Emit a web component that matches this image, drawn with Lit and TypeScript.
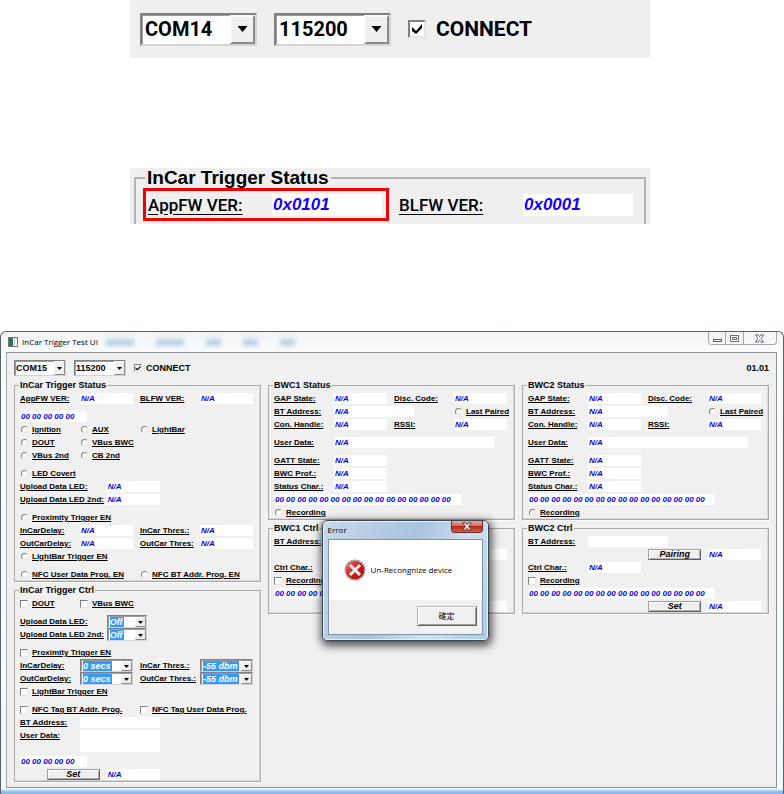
import { LitElement, html, css, svg, nothing } from "lit";
import { customElement } from "lit/decorators.js";

const BYTES_5 = "00 00 00 00 00";
const BYTES_16 = Array(16).fill("00").join(" ");

/* Etched group box with a bold caption set into its top line. */
@customElement("group-box")
export class GroupBox extends LitElement {
  static properties = { caption: { type: String } };
  declare caption: string;

  static styles = css`
    :host {
      display: block;
      min-width: 0;
    }
    fieldset {
      margin: 0;
      padding: 2px 0 0 5px;
      min-inline-size: 0;
      border: 1px solid #a9a9a9;
      box-shadow: inset -1px -1px 0 #d8d8d8, 1px 1px 0 #fcfcfc;
    }
    legend {
      margin-left: -1px;
      padding: 0 1px;
      font: bold 9px/10px "Liberation Sans", Arial, sans-serif;
      color: #000;
    }
  `;

  render() {
    return html`<fieldset>
      <legend>${this.caption}</legend>
      <slot></slot>
    </fieldset>`;
  }
}

@customElement("app-root")
export class AppRoot extends LitElement {
  static styles = css`
    :host {
      display: block;
      background: #fff;
      color: #000;
      font: bold 8px/13px "Liberation Sans", Arial, sans-serif;
    }
    * {
      box-sizing: border-box;
    }
    input,
    select,
    textarea,
    button {
      margin: 0;
      padding: 0;
      border: 0;
      border-radius: 0;
      appearance: none;
      outline: none;
      min-width: 0;
      color: inherit;
      font: inherit;
    }

    /* ---- enlarged strips ---- */
    .strip {
      max-width: 520px;
      margin-left: 130px;
      background: #efefef;
    }
    .connect-strip {
      display: flex;
      align-items: center;
      height: 58px;
      padding-left: 10px;
      gap: 17px;
      font: bold 20px/24px Roboto, "Liberation Sans", sans-serif;
    }
    .version-strip {
      margin-top: 110px;
      height: 56px;
      padding: 0 4px;
      overflow: hidden;
    }
    .version-box {
      margin: 0;
      padding: 1px 0 10px 7px;
      min-inline-size: 0;
      border: 2px solid #b4b4b4;
      border-bottom: 0;
    }
    .version-box legend {
      margin-left: 2px;
      padding: 0 2px;
      font: bold 19px/19px "Liberation Sans", Arial, sans-serif;
    }
    .version-row {
      display: grid;
      grid-template-columns: 246px 1fr;
      gap: 5px;
    }
    .version-cell {
      display: grid;
      grid-template-columns: 124px 110px;
      align-items: center;
      height: 33px;
      padding-left: 2px;
      border: 3px solid transparent;
    }
    .version-cell.marked {
      border-color: #f00000;
    }
    .version-cell label {
      font: 500 17px/20px Roboto, "Liberation Sans", sans-serif;
      text-decoration: underline;
      text-underline-offset: 3px;
    }
    .version-cell input {
      height: 22px;
      padding-left: 1px;
      background: #fff;
      color: #1400ff;
      font: italic bold 17px/22px "Liberation Sans", Arial, sans-serif;
    }

    /* ---- drop-downs ---- */
    .combo {
      display: flex;
      align-items: stretch;
      justify-content: space-between;
      background: #fff;
      border: 1px solid;
      border-color: #808080 #d4d4d4 #d4d4d4 #808080;
      box-shadow: inset 1px 1px 0 #9c9c9c;
    }
    .combo select {
      background: transparent;
    }
    .arrow {
      display: flex;
      align-items: center;
      justify-content: center;
      flex: none;
      width: 11px;
      background: #efefef;
      border: 1px solid;
      border-color: #f8f8f8 #8a8a8a #8a8a8a #f8f8f8;
    }
    .arrow svg {
      display: block;
      width: 5px;
      height: 3px;
    }
    .combo.large {
      width: 117px;
      height: 33px;
      border-width: 2px;
      padding-left: 3px;
    }
    .combo.large .arrow {
      width: 25px;
      border-width: 2px;
    }
    .combo.large .arrow svg {
      width: 11px;
      height: 6px;
    }
    .combo.bar {
      width: 52px;
      height: 16px;
      padding-left: 1px;
      font-size: 9px;
    }
    .combo.marked {
      height: 13px;
      padding: 1px 0 0 2px;
      font-style: italic;
      font-size: 9px;
      line-height: 11px;
    }
    .combo.marked select {
      background: #3399ff;
      color: #fff;
      padding-right: 1px;
    }

    /* ---- tick boxes and radios ---- */
    .tick {
      display: flex;
      align-items: center;
      gap: 4px;
      white-space: nowrap;
    }
    .tick input {
      flex: none;
      width: 8px;
      height: 8px;
      background: #fff;
      border: 1px solid;
      border-color: #808080 #e6e6e6 #e6e6e6 #808080;
    }
    .tick input[type="radio"] {
      border-radius: 50%;
      margin-left: 1px;
      width: 7px;
      height: 7px;
    }
    .tick .mark {
      display: grid;
    }
    .tick .mark > * {
      grid-area: 1 / 1;
    }
    .tick .mark svg {
      place-self: center;
      width: 6px;
      height: 6px;
      pointer-events: none;
    }
    .tick.large {
      gap: 10px;
      font-size: 21px;
    }
    .tick.large input {
      width: 18px;
      height: 18px;
      border-width: 2px;
    }
    .tick.large .mark svg {
      width: 12px;
      height: 12px;
    }
    .caption {
      text-decoration: underline;
      text-underline-offset: 1px;
      white-space: nowrap;
    }

    /* ---- application window ---- */
    .window {
      position: relative;
      margin-top: 107px;
      padding: 0 6px 6px 5px;
      border: 1px solid #5a6066;
      border-bottom-color: #7d9cc4;
      border-radius: 6px 6px 0 0;
      background:
        linear-gradient(#e4f8ff, #8fb6e8 60%) bottom / 100% 5px no-repeat,
        linear-gradient(#f1f4f6, #fbfcfd 5%, #f8fafb 60%, #f2fbfb);
    }
    .titlebar {
      display: flex;
      align-items: flex-start;
      height: 20px;
    }
    .app-icon {
      flex: none;
      width: 10px;
      height: 10px;
      margin: 5px 4px 0 2px;
    }
    .title {
      margin: 0;
      padding-top: 4px;
      font: 8px/12px "Open Sans", "Noto Sans", sans-serif;
      white-space: nowrap;
    }
    .reflections {
      display: flex;
      flex: 1;
      gap: 22px;
      padding: 7px 0 0 8px;
    }
    .reflections i {
      width: 15px;
      height: 7px;
      background: #9fc3e0;
      filter: blur(2px);
      opacity: 0.7;
    }
    .reflections i.wide {
      width: 28px;
    }
    .window-buttons {
      display: flex;
      width: 69px;
      height: 13px;
      border: 1px solid #a3a8ad;
      border-top: 0;
      border-radius: 0 0 4px 4px;
    }
    .window-buttons button {
      display: grid;
      place-items: center;
      flex: 1;
      background: transparent;
      border-right: 1px solid #a3a8ad;
    }
    .window-buttons button:last-child {
      flex: 2;
      border-right: 0;
    }
    .window-buttons svg {
      display: block;
      width: 11px;
      height: 9px;
    }
    .client {
      padding: 7px 7px 5px;
      background: #f0f0f0;
      border: 1px solid #8c9196;
      border-left-color: #a5a9ad;
    }
    .bar-row {
      display: flex;
      align-items: center;
      gap: 8px;
      height: 16px;
      margin-bottom: 4px;
      font-size: 9px;
    }
    .version {
      margin-left: auto;
    }
    .columns {
      display: grid;
      grid-template-columns: repeat(3, minmax(0, 1fr));
      gap: 7px;
      align-items: start;
    }
    .column {
      display: grid;
      gap: 3px;
      min-width: 0;
    }

    /* ---- rows on a 36-unit character grid ---- */
    .row {
      display: grid;
      grid-template-columns: repeat(36, minmax(0, 1fr));
      align-items: center;
      height: 13px;
    }
    .row.spaced {
      margin-top: 5px;
    }
    .row.tall {
      height: 26px;
      align-items: start;
    }
    .u0 { grid-column-start: 1; }
    .u4 { grid-column-start: 5; }
    .u9 { grid-column-start: 10; }
    .u13 { grid-column-start: 14; }
    .u18 { grid-column-start: 19; }
    .u27 { grid-column-start: 28; }
    .s6 { grid-column-end: span 6; }
    .s8 { grid-column-end: span 8; }
    .s9 { grid-column-end: span 9; }
    .s10 { grid-column-end: span 10; }
    .s12 { grid-column-end: span 12; }
    .s13 { grid-column-end: span 13; }
    .s18 { grid-column-end: span 18; }
    .s24 { grid-column-end: span 24; }
    .s28 { grid-column-end: span 28; }
    .row input.value,
    .row textarea {
      width: 100%;
      height: 11px;
      padding-left: 1px;
      background: #fff;
      color: #0000f0;
      font-style: italic;
      line-height: 11px;
    }
    .row textarea {
      height: 22px;
      margin-top: 1px;
      resize: none;
      display: block;
    }
    .push {
      height: 11px;
      background: #efefef;
      border: 1px solid;
      border-color: #a0a0a0 #606060 #606060 #a0a0a0;
      box-shadow: inset 1px 1px 0 #fff, inset -1px -1px 0 #b0b0b0;
      font-style: italic;
      font-size: 9px;
      line-height: 9px;
    }

    /* ---- error dialog ---- */
    .dialog {
      position: absolute;
      top: 188px;
      left: 41%;
      width: 167px;
      padding: 0 5px 5px;
      border: 1px solid #3c4650;
      border-radius: 5px;
      background: linear-gradient(115deg, #c9d9ea, #a9c3de 45%, #cfe0f0 70%, #a7cdec);
      box-shadow: inset 0 0 0 1px #e8f2fb, 1px 3px 8px 2px rgba(0, 0, 0, 0.65);
      font: 8px/12px "Open Sans", "Noto Sans", "Noto Sans CJK TC", sans-serif;
    }
    .dialog-title {
      display: flex;
      justify-content: space-between;
      height: 18px;
    }
    .dialog-title h2 {
      margin: 0;
      padding-top: 3px;
      font: inherit;
    }
    .dialog-close {
      display: grid;
      place-items: center;
      width: 32px;
      height: 12px;
      border: 1px solid #6b2a26;
      border-top: 0;
      border-radius: 0 0 4px 4px;
      background: linear-gradient(#e3a79d, #cf6a5a 45%, #b42a18 50%, #cf6248);
    }
    .dialog-close svg {
      display: block;
      width: 10px;
      height: 9px;
    }
    .dialog-body {
      border: 1px solid #7f93a8;
      background: #fff;
    }
    .message {
      display: flex;
      align-items: center;
      gap: 5px;
      height: 60px;
      padding-left: 15px;
    }
    .message svg {
      flex: none;
      width: 22px;
      height: 22px;
    }
    .message p {
      margin: 0;
      white-space: nowrap;
    }
    .actions {
      display: flex;
      justify-content: flex-end;
      padding: 6px 5px 8px;
      background: #f0f0f0;
    }
    .actions button {
      width: 60px;
      height: 20px;
      border: 1px solid;
      border-color: #b8b8b8 #606060 #606060 #b8b8b8;
      box-shadow: inset 1px 1px 0 #fff, inset -1px -1px 0 #a0a0a0;
      background: #f0f0f0;
    }
  `;

  private arrow() {
    return html`<span class="arrow" aria-hidden="true">
      <svg viewBox="0 0 10 6"><path d="M0 0h10L5 6z" fill="#000" /></svg>
    </span>`;
  }

  private combo(classes: string, name: string, value: string, id?: string) {
    return html`<span class="combo ${classes}">
      <select id=${id ?? nothing} aria-label=${name}>
        <option>${value}</option>
      </select>
      ${this.arrow()}
    </span>`;
  }

  private connect(size = "") {
    return html`<label class="tick ${size}">
      <span class="mark">
        <input type="checkbox" checked />
        <svg viewBox="0 0 12 12">
          <path d="M1 4l4 4 6-7v4L5 11 1 8z" fill="#000" />
        </svg>
      </span>
      CONNECT
    </label>`;
  }

  private tick(type: "radio" | "checkbox", text: string, place: string) {
    return html`<label class="tick ${place}">
      <input type=${type} /><span class="caption">${text}</span>
    </label>`;
  }

  private caption(text: string, id: string, place = "u0 s9") {
    return html`<label class="caption ${place}" for=${id}>${text}</label>`;
  }

  private value(id: string, place: string, value = "N/A") {
    return html`<input class="value ${place}" id=${id} aria-label=${id} readonly .value=${value} />`;
  }

  private triggerStatus() {
    const radio = (t: string, p: string) => this.tick("radio", t, p);
    return html`<group-box caption="InCar Trigger Status">
      <div class="row">
        ${this.caption("AppFW VER:", "app-fw")} ${this.value("app-fw", "u9 s8")}
        ${this.caption("BLFW VER:", "bl-fw", "u18 s9")} ${this.value("bl-fw", "u27 s8")}
      </div>
      <div class="row spaced">${this.value("status-bytes", "u0 s10", BYTES_5)}</div>
      <div class="row">
        ${radio("Ignition", "u0 s9")} ${radio("AUX", "u9 s9")} ${radio("LightBar", "u18 s9")}
      </div>
      <div class="row">${radio("DOUT", "u0 s9")} ${radio("VBus BWC", "u9 s9")}</div>
      <div class="row">${radio("VBus 2nd", "u0 s9")} ${radio("CB 2nd", "u9 s9")}</div>
      <div class="row spaced">${radio("LED Covert", "u0 s18")}</div>
      <div class="row">
        ${this.caption("Upload Data LED:", "led", "u0 s13")} ${this.value("led", "u13 s8")}
      </div>
      <div class="row">
        ${this.caption("Upload Data LED 2nd:", "led2", "u0 s13")} ${this.value("led2", "u13 s8")}
      </div>
      <div class="row spaced">${radio("Proximity Trigger EN", "u0 s18")}</div>
      <div class="row">
        ${this.caption("InCarDelay:", "in-delay")} ${this.value("in-delay", "u9 s8")}
        ${this.caption("InCar Thres.:", "in-thres", "u18 s9")} ${this.value("in-thres", "u27 s8")}
      </div>
      <div class="row">
        ${this.caption("OutCarDelay:", "out-delay")} ${this.value("out-delay", "u9 s8")}
        ${this.caption("OutCar Thres:", "out-thres", "u18 s9")} ${this.value("out-thres", "u27 s8")}
      </div>
      <div class="row">${radio("LightBar Trigger EN", "u0 s18")}</div>
      <div class="row spaced">
        ${radio("NFC User Data Prog. EN", "u0 s18")} ${radio("NFC BT Addr. Prog. EN", "u18 s18")}
      </div>
    </group-box>`;
  }

  private triggerCtrl() {
    const box = (t: string, p: string) => this.tick("checkbox", t, p);
    return html`<group-box caption="InCar Trigger Ctrl">
      <div class="row">${box("DOUT", "u0 s9")} ${box("VBus BWC", "u9 s9")}</div>
      <div class="row spaced">
        ${this.caption("Upload Data LED:", "set-led", "u0 s13")}
        ${this.combo("marked u13 s6", "Upload Data LED", "Off", "set-led")}
      </div>
      <div class="row">
        ${this.caption("Upload Data LED 2nd:", "set-led2", "u0 s13")}
        ${this.combo("marked u13 s6", "Upload Data LED 2nd", "Off", "set-led2")}
      </div>
      <div class="row spaced">${box("Proximity Trigger EN", "u0 s18")}</div>
      <div class="row">
        ${this.caption("InCarDelay:", "set-in-delay")}
        ${this.combo("marked u9 s8", "InCarDelay", "0 secs", "set-in-delay")}
        ${this.caption("InCar Thres.:", "set-in-thres", "u18 s9")}
        ${this.combo("marked u27 s8", "InCar Thres.", "-55 dbm", "set-in-thres")}
      </div>
      <div class="row">
        ${this.caption("OutCarDelay:", "set-out-delay")}
        ${this.combo("marked u9 s8", "OutCarDelay", "0 secs", "set-out-delay")}
        ${this.caption("OutCar Thres.:", "set-out-thres", "u18 s9")}
        ${this.combo("marked u27 s8", "OutCar Thres.", "-55 dbm", "set-out-thres")}
      </div>
      <div class="row">${box("LightBar Trigger EN", "u0 s18")}</div>
      <div class="row spaced">
        ${box("NFC Tag BT Addr. Prog.", "u0 s18")} ${box("NFC Tag User Data Prog.", "u18 s18")}
      </div>
      <div class="row">
        ${this.caption("BT Address:", "tag-address")} ${this.value("tag-address", "u9 s12", "")}
      </div>
      <div class="row tall">
        ${this.caption("User Data:", "tag-data")}
        <textarea class="u9 s12" id="tag-data"></textarea>
      </div>
      <div class="row">${this.value("ctrl-bytes", "u0 s10", BYTES_5)}</div>
      <div class="row">
        <button class="push u4 s8">Set</button>
        ${this.value("set-result", "u13 s8")}
      </div>
    </group-box>`;
  }

  private bwc(n: number) {
    const id = (s: string) => `bwc${n}-${s}`;
    return html`<div class="column">
      <group-box caption="BWC${n} Status">
        <div class="row">
          ${this.caption("GAP State:", id("gap"))} ${this.value(id("gap"), "u9 s8")}
          ${this.caption("Disc. Code:", id("disc"), "u18 s9")} ${this.value(id("disc"), "u27 s8")}
        </div>
        <div class="row">
          ${this.caption("BT Address:", id("address"))} ${this.value(id("address"), "u9 s12")}
          ${this.tick("radio", "Last Paired", "u27 s9")}
        </div>
        <div class="row">
          ${this.caption("Con. Handle:", id("handle"))} ${this.value(id("handle"), "u9 s8")}
          ${this.caption("RSSI:", id("rssi"), "u18 s9")} ${this.value(id("rssi"), "u27 s8")}
        </div>
        <div class="row spaced">
          ${this.caption("User Data:", id("data"))} ${this.value(id("data"), "u9 s24")}
        </div>
        <div class="row spaced">
          ${this.caption("GATT State:", id("gatt"))} ${this.value(id("gatt"), "u9 s8")}
        </div>
        <div class="row">
          ${this.caption("BWC Prof.:", id("prof"))} ${this.value(id("prof"), "u9 s8")}
        </div>
        <div class="row">
          ${this.caption("Status Char.:", id("char"))} ${this.value(id("char"), "u9 s8")}
        </div>
        <div class="row">${this.value(id("bytes"), "u0 s28", BYTES_16)}</div>
        <div class="row">${this.tick("radio", "Recording", "u0 s18")}</div>
      </group-box>
      <group-box caption="BWC${n} Ctrl">
        <div class="row">
          ${this.caption("BT Address:", id("set-address"))}
          ${this.value(id("set-address"), "u9 s12", "")}
        </div>
        <div class="row">
          <button class="push u18 s8">Pairing</button>
          ${this.value(id("pairing"), "u27 s8")}
        </div>
        <div class="row">
          ${this.caption("Ctrl Char.:", id("ctrl"))} ${this.value(id("ctrl"), "u9 s8")}
        </div>
        <div class="row">${this.tick("checkbox", "Recording", "u0 s18")}</div>
        <div class="row">${this.value(id("ctrl-bytes"), "u0 s28", BYTES_16)}</div>
        <div class="row">
          <button class="push u18 s8">Set</button>
          ${this.value(id("set"), "u27 s8")}
        </div>
      </group-box>
    </div>`;
  }

  private cross(fill: string, edge: string) {
    return svg`<path d="M1 0h3l1.500 2L7 0h3L7.200 4 10 8H7L5.500 6 4 8H1l2.800-4z"
      fill=${fill} stroke=${edge} stroke-width="1" />`;
  }

  private dialog() {
    return html`<section class="dialog" role="dialog" aria-labelledby="error-title">
      <div class="dialog-title">
        <h2 id="error-title">Error</h2>
        <button class="dialog-close" aria-label="Close">
          <svg viewBox="0 -1 11 10">${this.cross("#fff", "#5d3030")}</svg>
        </button>
      </div>
      <div class="dialog-body">
        <div class="message">
          <svg viewBox="0 0 22 22" aria-hidden="true">
            <defs>
              <linearGradient id="red" x1="0" y1="0" x2="1" y2="1">
                <stop offset="0" stop-color="#e8796f" />
                <stop offset="0.500" stop-color="#c9211b" />
                <stop offset="1" stop-color="#a80d0d" />
              </linearGradient>
            </defs>
            <circle cx="11" cy="11" r="10.500" fill="#8e8e8e" />
            <circle cx="11" cy="11" r="9.800" fill="#d8c8c8" />
            <circle cx="11" cy="11" r="9.300" fill="url(#red)" />
            <path d="M7 7l8 8M15 7l-8 8" stroke="#f4ecec" stroke-width="3" stroke-linecap="square" />
          </svg>
          <p>Un-Recongnize device</p>
        </div>
        <div class="actions"><button>確定</button></div>
      </div>
    </section>`;
  }

  render() {
    return html`
      <div class="strip connect-strip">
        ${this.combo("large", "Port", "COM14")} ${this.combo("large", "Baud rate", "115200")}
        ${this.connect("large")}
      </div>

      <div class="strip version-strip">
        <fieldset class="version-box">
          <legend>InCar Trigger Status</legend>
          <div class="version-row">
            <div class="version-cell marked">
              <label for="app-version">AppFW VER:</label>
              <input id="app-version" readonly value="0x0101" />
            </div>
            <div class="version-cell">
              <label for="bl-version">BLFW VER:</label>
              <input id="bl-version" readonly value="0x0001" />
            </div>
          </div>
        </fieldset>
      </div>

      <main class="window">
        <header class="titlebar">
          <svg class="app-icon" viewBox="0 0 10 10" aria-hidden="true">
            <rect x="0.500" y="0.500" width="9" height="9" fill="#fff" stroke="#777" />
            <rect x="1" y="1" width="4" height="8" fill="#2f6f63" />
            <rect x="6" y="1" width="1" height="8" fill="#b9c4cc" />
          </svg>
          <h1 class="title">InCar Trigger Test UI</h1>
          <div class="reflections" aria-hidden="true">
            <i class="wide"></i><i class="wide"></i><i></i><i></i><i></i>
          </div>
          <div class="window-buttons">
            <button aria-label="Minimize">
              <svg viewBox="0 0 11 9"><rect x="1.500" y="5.500" width="8" height="2" fill="#fff" stroke="#555a66" /></svg>
            </button>
            <button aria-label="Maximize">
              <svg viewBox="0 0 11 9">
                <rect x="1.500" y="1.500" width="8" height="6" fill="#fff" stroke="#6a6f78" />
                <rect x="3.500" y="3.500" width="4" height="2" fill="none" stroke="#6a6f78" />
              </svg>
            </button>
            <button aria-label="Close">
              <svg viewBox="0 -1 11 10">${this.cross("#fff", "#555a66")}</svg>
            </button>
          </div>
        </header>

        <div class="client">
          <div class="bar-row">
            ${this.combo("bar", "Port", "COM15")} ${this.combo("bar", "Baud rate", "115200")}
            ${this.connect()}
            <span class="version">01.01</span>
          </div>
          <div class="columns">
            <div class="column">${this.triggerStatus()} ${this.triggerCtrl()}</div>
            ${this.bwc(1)} ${this.bwc(2)}
          </div>
        </div>

        ${this.dialog()}
      </main>
    `;
  }
}
